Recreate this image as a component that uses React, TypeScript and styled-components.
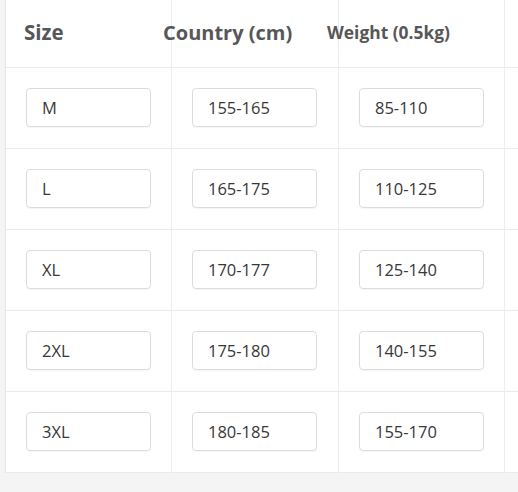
import styled, { createGlobalStyle } from 'styled-components';

const GlobalStyle = createGlobalStyle`
  html, body {
    margin: 0;
    padding: 0;
    background: #f4f4f4;
  }
  body {
    font-family: "Open Sans", "Noto Sans", sans-serif;
  }
`;

type Row = { size: string; height: string; weight: string };

const rows: Row[] = [
  { size: 'M', height: '155-165', weight: '85-110' },
  { size: 'L', height: '165-175', weight: '110-125' },
  { size: 'XL', height: '170-177', weight: '125-140' },
  { size: '2XL', height: '175-180', weight: '140-155' },
  { size: '3XL', height: '180-185', weight: '155-170' },
];

const headers = [
  { label: 'Size', offset: 18, size: 20.5 },
  { label: 'Country (cm)', offset: -9, size: 20 },
  { label: 'Weight (0.5kg)', offset: -12, size: 17.4 },
];

const App = () => {
  return (
    <>
      <GlobalStyle />
      <Page>
        <Table>
          {headers.map((h) => (
            <HeadCell key={h.label}>
              <HeadText $offset={h.offset} $size={h.size}>
                {h.label}
              </HeadText>
            </HeadCell>
          ))}
          <HeadCell />
          {rows.map((r) => (
            <Line key={r.size}>
              <Cell>
                <ValueBox>{r.size}</ValueBox>
              </Cell>
              <Cell>
                <ValueBox>{r.height}</ValueBox>
              </Cell>
              <Cell>
                <ValueBox>{r.weight}</ValueBox>
              </Cell>
              <Cell />
            </Line>
          ))}
        </Table>
      </Page>
    </>
  );
};

export default App;

const Page = styled.div`
  width: 518px;
  height: 492px;
  padding-left: 5px;
  box-sizing: border-box;
  overflow: hidden;
`;

const Table = styled.div`
  display: grid;
  grid-template-columns: 166px 167px 166px 1fr;
  grid-template-rows: 68px repeat(5, 81px);
  background: #ffffff;
  border-left: 1px solid #e6e6e6;
  width: 520px;
`;

const HeadCell = styled.div`
  display: flex;
  align-items: center;
  border-right: 1px solid #eeeeee;
  border-bottom: 1px solid #ebebeb;
  box-sizing: border-box;
  padding-bottom: 3px;
  min-width: 0;
`;

const HeadText = styled.span<{ $offset: number; $size: number }>`
  margin-left: ${(p) => p.$offset}px;
  font-size: ${(p) => p.$size}px;
  font-weight: 700;
  color: #575757;
  white-space: nowrap;
  position: relative;
`;

const Line = styled.div`
  display: contents;
`;

const Cell = styled.div`
  display: flex;
  align-items: flex-start;
  padding: 20px 0 0 20px;
  border-right: 1px solid #eeeeee;
  border-bottom: 1px solid #ebebeb;
  box-sizing: border-box;
`;

const ValueBox = styled.div`
  width: 125px;
  height: 39px;
  box-sizing: border-box;
  border: 1px solid #dcdcdc;
  border-radius: 4px;
  box-shadow: 0 1px 1px rgba(0, 0, 0, 0.04);
  display: flex;
  align-items: center;
  padding-left: 15px;
  font-size: 16.5px;
  color: #383838;
`;
